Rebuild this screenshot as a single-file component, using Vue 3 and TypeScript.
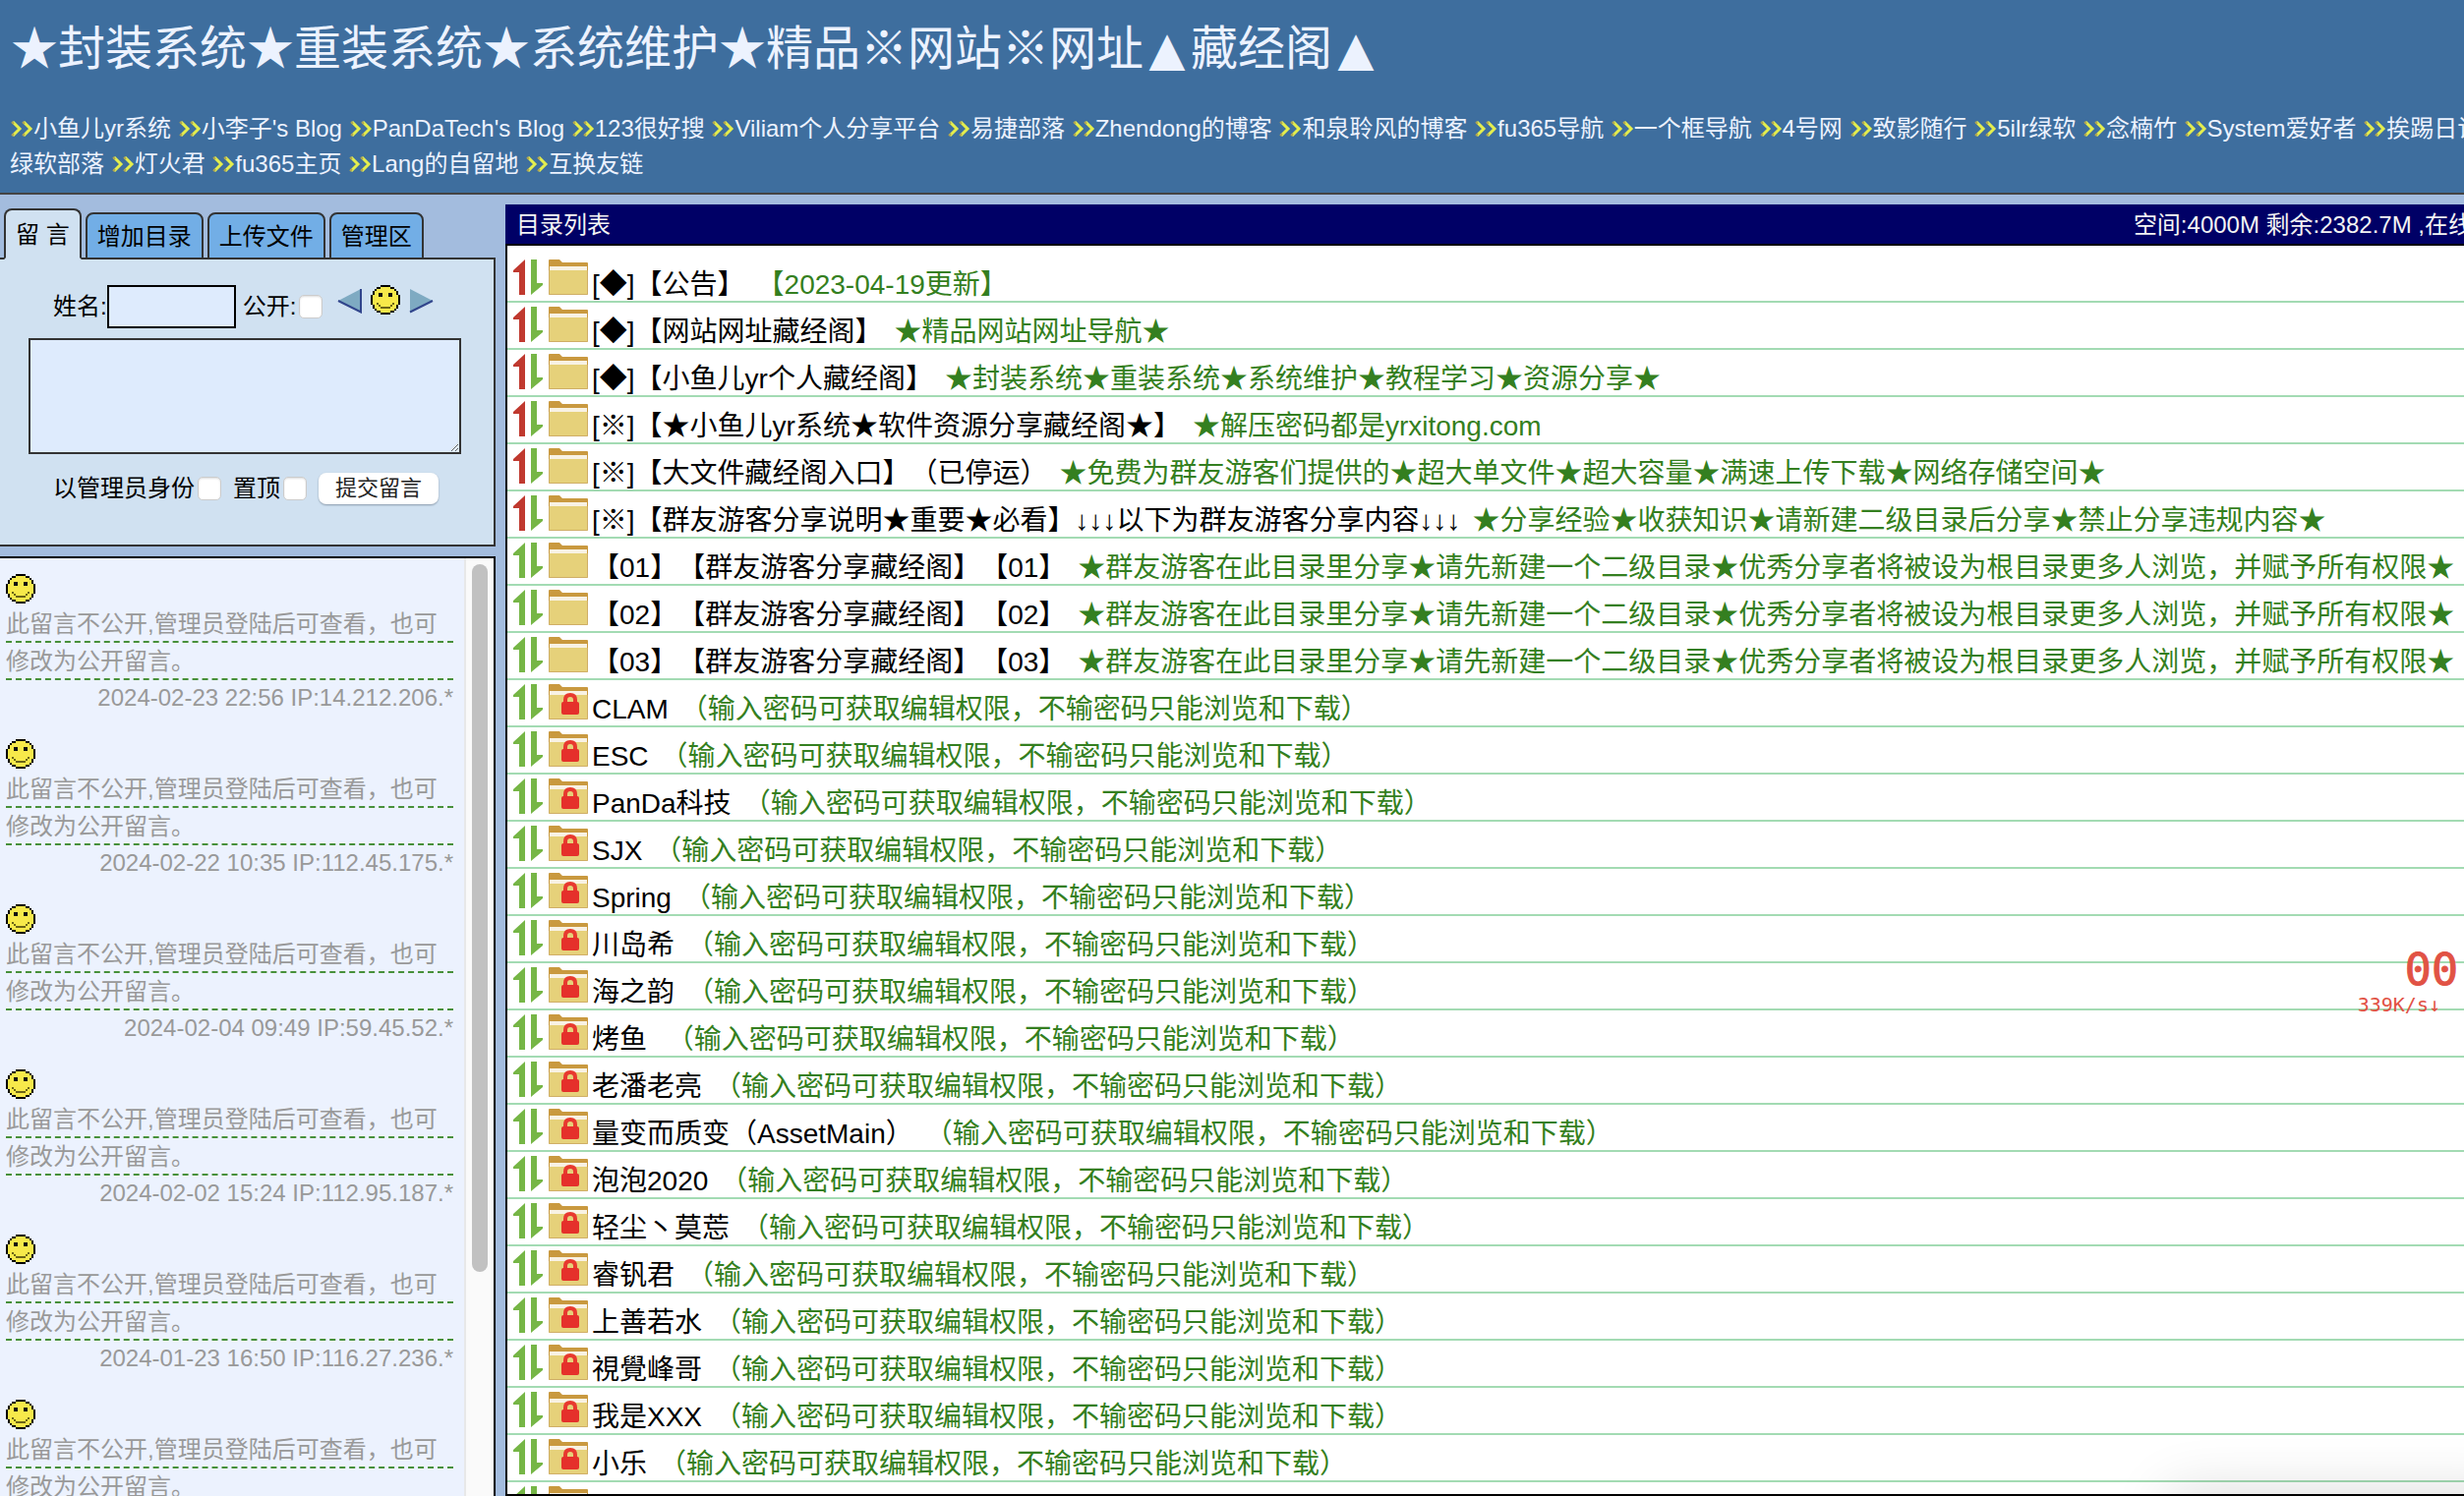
<script setup lang="ts">
import { ref } from 'vue'

interface Entry {
  name: string
  note: string
  pinned?: boolean
  locked?: boolean
}

const linkRows: string[][] = [
  [
    '小鱼儿yr系统', "小李子's Blog", "PanDaTech's Blog", '123很好搜', 'Viliam个人分享平台', '易捷部落',
    'Zhendong的博客', '和泉聆风的博客', 'fu365导航', '一个框导航', '4号网', '致影随行', '5ilr绿软', '念楠竹',
    'System爱好者', '挨踢日记',
  ],
  ['绿软部落', '灯火君', 'fu365主页', 'Lang的自留地', '互换友链'],
]

const tabs = ['留 言', '增加目录', '上传文件', '管理区']
const activeTab = ref(0)

const shareNote = '★群友游客在此目录里分享★请先新建一个二级目录★优秀分享者将被设为根目录更多人浏览，并赋予所有权限★'
const lockNote = '（输入密码可获取编辑权限，不输密码只能浏览和下载）'

const entries: Entry[] = [
  { name: '[◆]【公告】', note: '【2023-04-19更新】', pinned: true },
  { name: '[◆]【网站网址藏经阁】', note: '★精品网站网址导航★', pinned: true },
  { name: '[◆]【小鱼儿yr个人藏经阁】', note: '★封装系统★重装系统★系统维护★教程学习★资源分享★', pinned: true },
  { name: '[※]【★小鱼儿yr系统★软件资源分享藏经阁★】', note: '★解压密码都是yrxitong.com', pinned: true },
  { name: '[※]【大文件藏经阁入口】（已停运）', note: '★免费为群友游客们提供的★超大单文件★超大容量★满速上传下载★网络存储空间★', pinned: true },
  { name: '[※]【群友游客分享说明★重要★必看】↓↓↓以下为群友游客分享内容↓↓↓', note: '★分享经验★收获知识★请新建二级目录后分享★禁止分享违规内容★', pinned: true },
  { name: '【01】【群友游客分享藏经阁】【01】', note: shareNote },
  { name: '【02】【群友游客分享藏经阁】【02】', note: shareNote },
  { name: '【03】【群友游客分享藏经阁】【03】', note: shareNote },
  ...[
    'CLAM', 'ESC', 'PanDa科技', 'SJX', 'Spring', '川岛希', '海之韵', '烤鱼\u00a0', '老潘老亮', '量变而质变（AssetMain）',
    '泡泡2020', '轻尘丶莫莣', '睿钒君', '上善若水', '視覺峰哥', '我是XXX', '小乐', '小鱼',
  ].map((name) => ({ name, note: lockNote, locked: true })),
]

const messages = [
  '2024-02-23 22:56 IP:14.212.206.*',
  '2024-02-22 10:35 IP:112.45.175.*',
  '2024-02-04 09:49 IP:59.45.52.*',
  '2024-02-02 15:24 IP:112.95.187.*',
  '2024-01-23 16:50 IP:116.27.236.*',
  '2024-01-20 11:08 IP:113.88.14.*',
]
</script>

<template>
  <div class="page">
    <svg class="defs" aria-hidden="true">
      <symbol id="smiley" viewBox="0 0 15 15">
        <g shape-rendering="crispEdges">
          <path fill="#000" d="M5 0h5v1h2v1h1v1h1v2h1v5h-1v2h-1v1h-1v1h-2v1H5v-1H3v-1H2v-1H1v-2H0V5h1V3h1V2h1V1h2z" />
          <path fill="#f7e94a" d="M5 1h5v1h2v1h1v2h1v5h-1v2h-1v1h-2v1H5v-1H3v-1H2v-2H1V5h1V3h1V2h2z" />
          <path fill="#111" d="M4 4h2v2H4zM9 4h2v2H9z" />
          <path fill="#6b6418" d="M3 9h1v1H3zM11 9h1v1h-1zM4 10h1v1H4zM10 10h1v1h-1zM5 11h5v1H5z" />
        </g>
      </symbol>
      <symbol id="chevrons" viewBox="0 0 24 16">
        <path d="M3 1l7 7-7 7M14 1l7 7-7 7" fill="none" stroke="#e4ee4e" stroke-width="3" />
        <path d="M2 1l2 2M13 1l2 2M2 15l2-2M13 15l2-2" fill="none" stroke="#b0a450" stroke-width="2" />
      </symbol>
      <symbol id="sort" viewBox="0 0 30 36">
        <path d="M12 0v36H6V13H0V11z" />
        <path fill="#76b646" d="M18 0h6v24h6v2L18 36z" />
      </symbol>
      <symbol id="folder" viewBox="0 0 40 36">
        <path fill="#c9993f" d="M0 1q0-1 1-1h10l3 3h25q1 0 1 1v10H0z" />
        <path fill="#f8f2e4" d="M1 7h38v5H1z" />
        <path fill="#e6d17a" d="M0 11h40v24q0 1-1 1H1q-1 0-1-1z" />
        <path fill="none" stroke="#cfae66" d="M.5 11v24.500h39V11" />
      </symbol>
      <symbol id="lock" viewBox="0 0 18 24">
        <path fill="none" stroke="#e8392f" stroke-width="4" d="M4 12V8q0-5 5-5t5 5v4" />
        <rect y="10" width="18" height="13" rx="2" fill="#e5302b" />
      </symbol>
    </svg>

    <header class="header">
      <h1>★封装系统★重装系统★系统维护★精品※网站※网址<span>▲</span>藏经阁<span>▲</span></h1>
      <nav class="links">
        <div v-for="(row, r) in linkRows" :key="r" class="link-row">
          <template v-for="(link, i) in row" :key="link">
            <a href="#"><svg v-if="r === 0 || i > 0" class="chev"><use href="#chevrons" /></svg>{{ link }}</a>{{ ' ' }}
          </template>
        </div>
      </nav>
    </header>

    <main class="main">
      <aside class="side">
        <div class="tabs">
          <button
            v-for="(tab, i) in tabs"
            :key="tab"
            type="button"
            :class="{ active: i === activeTab }"
            @click="activeTab = i"
          >{{ tab }}</button>
        </div>
        <form class="form" @submit.prevent>
          <div class="line">
            <label for="name">姓名:</label>
            <input id="name" class="name" type="text" />
            <label class="open" for="open">公开:</label>
            <input id="open" type="checkbox" />
            <button class="face" type="button" aria-label="上一个">
              <svg width="26" height="26" viewBox="0 0 26 26">
                <path d="M24 1v24L1 13z" fill="#7eaac2" />
                <path d="M24 1v23.500L1 13" fill="none" stroke="#31458c" stroke-width="2" />
              </svg>
            </button>
            <svg class="smile"><use href="#smiley" /></svg>
            <button class="face next" type="button" aria-label="下一个">
              <svg width="26" height="26" viewBox="0 0 26 26">
                <path d="M2 1v24l23-12z" fill="#7eaac2" />
                <path d="M2 24.500L25 13" fill="none" stroke="#31458c" stroke-width="2" />
              </svg>
            </button>
          </div>
          <textarea aria-label="留言内容"></textarea>
          <div class="line actions">
            <label for="admin">以管理员身份</label>
            <input id="admin" type="checkbox" />
            <label class="top" for="top">置顶</label>
            <input id="top" type="checkbox" />
            <button class="submit" type="submit">提交留言</button>
          </div>
        </form>
        <section class="board">
          <div class="messages">
            <article v-for="m in messages" :key="m">
              <svg class="smile"><use href="#smiley" /></svg>
              <p>此留言不公开,管理员登陆后可查看，也可</p>
              <p>修改为公开留言。</p>
              <footer>{{ m }}</footer>
            </article>
          </div>
          <div class="track"><div class="thumb"></div></div>
        </section>
      </aside>

      <section class="directory">
        <div class="title">
          <h2>目录列表</h2>
          <span>空间:4000M 剩余:2382.7M ,在线</span>
        </div>
        <div class="body">
          <ul>
            <li v-for="e in entries" :key="e.name">
              <svg class="sort" :class="{ pinned: e.pinned }"><use href="#sort" /></svg>
              <span class="folder">
                <svg><use href="#folder" /></svg>
                <svg v-if="e.locked" class="lock"><use href="#lock" /></svg>
              </span>
              <a href="#">{{ e.name }}<span class="note">{{ e.note }}</span></a>
            </li>
          </ul>
          <div class="shade"></div>
        </div>
      </section>
    </main>

    <div class="meter">
      <div class="count">00</div>
      <div class="speed">339K/s↓</div>
    </div>
  </div>
</template>

<style>
body {
  margin: 0;
  overflow: hidden;
}
</style>

<style scoped>
.page {
  display: flex;
  flex-direction: column;
  height: 100vh;
  overflow: hidden;
  background: #a3bcde;
  color: #000;
  font: 24px/36px "Liberation Sans", "Noto Sans CJK SC", sans-serif;
  text-spacing-trim: space-all;
}
.page * {
  box-sizing: border-box;
}
.defs {
  position: absolute;
  width: 0;
  height: 0;
}
button,
input,
textarea {
  margin: 0;
  font: inherit;
  color: inherit;
}
a {
  color: inherit;
  text-decoration: none;
}
.header {
  flex: none;
  padding: 0 10px 11px;
  border-bottom: 2px solid #444;
  background: #3e6e9e;
  color: #ecf2fe;
}
h1 {
  height: 113px;
  margin: 0;
  padding-left: 1px;
  font-family: "Noto Sans CJK SC", sans-serif;
  font-size: 48px;
  font-weight: 400;
  line-height: 90px;
  white-space: nowrap;
}
h1 span {
  display: inline-block;
  width: 48px;
  font-family: "DejaVu Sans", sans-serif;
  text-align: center;
}
.link-row {
  white-space: nowrap;
}
.chev {
  width: 24px;
  height: 16px;
}
.main {
  display: flex;
  flex: 1;
  gap: 10px;
  min-height: 0;
  padding-top: 10px;
}
.side {
  display: flex;
  flex: none;
  flex-direction: column;
  width: 504px;
}
.tabs {
  display: flex;
  align-items: flex-end;
  gap: 4px;
  height: 56px;
  margin-bottom: -2px;
  padding-left: 4px;
}
.tabs button {
  position: relative;
  height: 48px;
  padding: 2px 10px 0;
  border: 2px solid #333;
  border-radius: 8px 8px 0 0;
  background: #72aee6;
}
.tabs button.active {
  height: 52px;
  border-bottom-color: #d0e1f1;
  background: #d0e1f1;
}
.form {
  flex: none;
  height: 294px;
  padding-top: 26px;
  border: solid #333;
  border-width: 2px 2px 2px 0;
  background: #d0e1f1;
}
.line {
  display: flex;
  align-items: center;
  padding-left: 54px;
}
.name {
  width: 131px;
  height: 44px;
  border: 2px solid #000;
  border-radius: 0;
  background: #deebfd;
}
.open {
  margin-left: 7px;
}
input[type="checkbox"] {
  width: 24px;
  height: 24px;
  margin-left: 3px;
  border: 1px solid #ccc;
  border-radius: 5px;
  background: #fff;
  box-shadow: inset 0 1px 2px #ddd;
  appearance: none;
}
.face {
  display: flex;
  margin: 0 8px 12px 15px;
  padding: 0;
  border: 0;
  background: none;
}
.face.next {
  margin-left: 8px;
}
.smile {
  display: block;
  width: 30px;
  height: 30px;
}
.line .smile {
  margin-bottom: 14px;
}
textarea {
  display: block;
  width: 440px;
  height: 118px;
  margin: 10px 0 17px 29px;
  border: 2px solid #333;
  background: #deebfd;
  resize: both;
}
.top {
  margin-left: 12px;
}
.submit {
  height: 32px;
  margin-left: 12px;
  padding: 0 17px;
  border: 0;
  border-radius: 8px;
  background: #fff;
  box-shadow: 0 1px 2px #8a9aab;
  color: #222;
  font-size: 22px;
  line-height: 32px;
}
.board {
  display: flex;
  flex: 1;
  min-height: 0;
  margin-top: 10px;
  border: solid #000;
  border-width: 2px 2px 0 0;
  background: #ecf2fe;
}
.messages {
  flex: 1;
  padding: 16px 11px 0 6px;
  overflow: hidden;
  color: #999;
}
article {
  height: 168px;
}
p {
  height: 38px;
  margin: 0;
  padding-top: 2px;
  border-bottom: 2px dashed #47903a;
  line-height: 34px;
  white-space: nowrap;
}
p:first-of-type {
  margin-top: 2px;
}
footer {
  text-align: right;
}
.track {
  width: 30px;
  padding: 6px 6px 0;
  border-left: 2px solid #e8e8e8;
  background: #fafafa;
}
.thumb {
  width: 16px;
  height: 76%;
  border-radius: 8px;
  background: #c1c1c1;
}
.directory {
  display: flex;
  flex: 1;
  flex-direction: column;
  min-width: 0;
}
.title {
  display: flex;
  flex: none;
  justify-content: space-between;
  height: 40px;
  padding-left: 11px;
  background: #006;
  color: #f4f4f4;
  line-height: 42px;
}
.title span {
  margin-right: -8px;
  white-space: nowrap;
}
h2 {
  margin: 0;
  font-size: 24px;
  font-weight: 400;
  line-height: 42px;
}
.body {
  position: relative;
  flex: 1;
  min-height: 0;
  padding-top: 10px;
  border: solid #000;
  border-width: 2px 0 2px 2px;
  overflow: hidden;
  background: #fff;
}
ul {
  margin: 0;
  padding: 0;
  list-style: none;
}
li {
  display: flex;
  height: 48px;
  padding: 4px 0 0 6px;
  border-bottom: 2px solid #a3dbb3;
  font-size: 28px;
}
li a {
  padding-top: 8px;
  white-space: nowrap;
}
.sort {
  flex: none;
  width: 30px;
  height: 36px;
  margin-right: 6px;
  fill: #76b646;
}
.sort.pinned {
  fill: #c0392f;
}
.folder {
  position: relative;
  flex: none;
  width: 40px;
  height: 36px;
  margin-right: 4px;
}
.folder svg {
  display: block;
  width: 40px;
  height: 36px;
}
.folder .lock {
  position: absolute;
  top: 8px;
  left: 13px;
  width: 18px;
  height: 24px;
}
.note {
  margin-left: 12px;
  color: #347f20;
}
.shade {
  position: absolute;
  right: -60px;
  bottom: -50px;
  width: 360px;
  height: 50px;
  box-shadow: 0 0 60px rgba(0, 0, 0, 0.16);
}
.meter {
  position: absolute;
  top: 964px;
  right: 6px;
  color: #e15244;
  font-family: "DejaVu Sans Mono", monospace;
}
.count {
  font-size: 45px;
  line-height: 46px;
  text-align: right;
  -webkit-text-stroke: 1px #e15244;
}
.speed {
  padding-right: 18px;
  font-size: 20px;
  line-height: 24px;
}
</style>
